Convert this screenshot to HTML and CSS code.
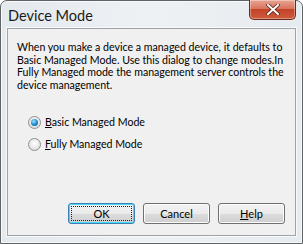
FILE: index.html
```html
<!DOCTYPE html>
<html lang="en">
<head>
    <meta charset="utf-8">
    <title>Device Mode</title>
    <link rel="stylesheet" href="styles.css">
</head>
<body>
<div class="window">
    <div class="titlebar">
        <span class="title">Device Mode</span>
        <button class="close-btn" aria-label="Close">
            <svg width="14" height="11" viewBox="0 0 14 11">
                <path d="M2 1 L12 10 M12 1 L2 10" stroke="#5a2216" stroke-width="3.6" stroke-linecap="square"/>
                <path d="M2 1 L12 10 M12 1 L2 10" stroke="#ffffff" stroke-width="2" stroke-linecap="square"/>
            </svg>
        </button>
    </div>

    <div class="client">
        <p class="intro">
            When you make a device a managed device, it defaults to<br>
            Basic Managed Mode. Use this dialog to change modes.In<br>
            Fully Managed mode the management server controls the<br>
            device management.
        </p>

        <div class="options">
            <label class="radio">
                <span class="radio-dot checked"></span>
                <span><u>B</u>asic Managed Mode</span>
            </label>
            <label class="radio">
                <span class="radio-dot"></span>
                <span><u>F</u>ully Managed Mode</span>
            </label>
        </div>

        <div class="buttons">
            <button class="btn default">OK</button>
            <button class="btn">Cancel</button>
            <button class="btn"><u>H</u>elp</button>
        </div>
    </div>
</div>
</body>
</html>
```

FILE: styles.css
```css
body {
    margin: 0;
    background: #ffffff;
    font-family: Lato, "Noto Sans", sans-serif;
}

.window {
    width: 303px;
    height: 244px;
    box-sizing: border-box;
    border: 1px solid #5f6366;
    border-radius: 7px 7px 0 0;
    background: linear-gradient(90deg, #e4e9ee 0%, #eef1f4 50%, #e6ebef 100%);
    box-shadow: inset 0 0 0 1px #f7f9fa;
    display: flex;
    flex-direction: column;
}

.titlebar {
    height: 27px;
    display: flex;
    align-items: flex-start;
    justify-content: space-between;
}

.title {
    font-size: 14.5px;
    color: #1a1a1a;
    margin: 6px 0 0 7px;
}

.close-btn {
    width: 47px;
    height: 20px;
    margin: -1px 6px 0 0;
    padding: 0;
    border: 1px solid #6b2a1d;
    border-top: none;
    border-radius: 0 0 5px 5px;
    background: linear-gradient(180deg, #e8a493 0%, #d9755f 45%, #c24429 50%, #cf5a3c 100%);
    box-shadow: inset 0 0 0 1px rgba(255, 255, 255, 0.35);
    display: flex;
    align-items: center;
    justify-content: center;
}

.client {
    flex: 1;
    margin: 0 6px 7px 6px;
    border: 1px solid #9ea3a8;
    box-shadow: 0 0 0 1px #f8f9fa;
    background: #f0f0f0;
    display: flex;
    flex-direction: column;
}

.intro {
    margin: 12px 0 0 9px;
    font-size: 10.6px;
    line-height: 12.7px;
    white-space: nowrap;
    color: #000;
}

.options {
    margin: 24px 0 0 20px;
    display: flex;
    flex-direction: column;
    gap: 9px;
}

.radio {
    display: flex;
    align-items: center;
    gap: 4px;
    font-size: 10.6px;
    color: #000;
}

.radio-dot {
    width: 11px;
    height: 11px;
    border-radius: 50%;
    border: 1px solid #8e8f8f;
    background: radial-gradient(circle at 50% 40%, #ffffff 0%, #e6e6e6 60%, #cfcfcf 100%);
    display: flex;
    align-items: center;
    justify-content: center;
}

.radio-dot.checked::after {
    content: "";
    width: 7px;
    height: 7px;
    border-radius: 50%;
    background: radial-gradient(circle at 40% 35%, #a6e1fb 0%, #1f8ecf 50%, #0c4f86 100%);
}

.buttons {
    margin-top: auto;
    margin-bottom: 11px;
    padding-right: 10px;
    display: flex;
    justify-content: flex-end;
    gap: 8px;
}

.btn {
    width: 67px;
    height: 21px;
    padding: 0;
    border: 1px solid #707070;
    border-radius: 3px;
    background: linear-gradient(180deg, #f2f2f2 0%, #ebebeb 50%, #dddddd 51%, #cfcfcf 100%);
    box-shadow: inset 0 0 0 1px #fcfcfc;
    font-family: Lato, "Noto Sans", sans-serif;
    font-size: 11px;
    color: #000;
}

.btn.default {
    border-color: #3c7fb1;
    box-shadow: inset 0 0 0 1px #48d8fb;
    outline: 1px dotted #222;
    outline-offset: -4px;
}
```
